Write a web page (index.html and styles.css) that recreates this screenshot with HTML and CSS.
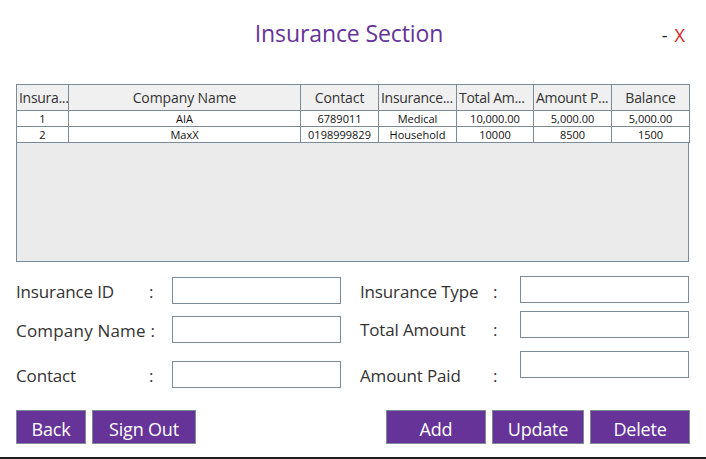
FILE: index.html
```html
<!DOCTYPE html>
<html lang="en">
<head>
<meta charset="utf-8">
<title>Insurance Section</title>
<link rel="stylesheet" href="styles.css">
</head>
<body>
<div class="window">
  <header class="titlebar">
    <div class="spacer"></div>
    <h1 class="title">Insurance Section</h1>
    <div class="controls"><span class="min">-</span><span class="close">X</span></div>
  </header>

  <div class="grid-wrap">
    <table class="grid">
      <colgroup>
        <col class="c-id"><col class="c-name"><col class="c-std"><col class="c-std"><col class="c-std2"><col class="c-std"><col class="c-std">
      </colgroup>
      <thead>
        <tr>
          <th class="left">Insura...</th>
          <th>Company Name</th>
          <th>Contact</th>
          <th class="left">Insurance...</th>
          <th class="left">Total Am...</th>
          <th class="left">Amount P...</th>
          <th>Balance</th>
        </tr>
      </thead>
      <tbody>
        <tr><td>1</td><td>AIA</td><td>6789011</td><td>Medical</td><td>10,000.00</td><td>5,000.00</td><td>5,000.00</td></tr>
        <tr><td>2</td><td>MaxX</td><td>0198999829</td><td>Household</td><td>10000</td><td>8500</td><td>1500</td></tr>
      </tbody>
    </table>
  </div>

  <div class="form">
    <div class="col col-left">
      <div class="field f-l1">
        <span class="label">Insurance ID</span><span class="colon">:</span>
        <input class="box" type="text">
      </div>
      <div class="field f-l2">
        <span class="label wide">Company Name :</span>
        <input class="box" type="text">
      </div>
      <div class="field f-l3">
        <span class="label">Contact</span><span class="colon">:</span>
        <input class="box" type="text">
      </div>
    </div>
    <div class="col col-right">
      <div class="field f-r1">
        <span class="label">Insurance Type</span><span class="colon">:</span>
        <input class="box" type="text">
      </div>
      <div class="field f-r2">
        <span class="label">Total Amount</span><span class="colon">:</span>
        <input class="box" type="text">
      </div>
      <div class="field f-r3">
        <span class="label">Amount Paid</span><span class="colon">:</span>
        <input class="box" type="text">
      </div>
    </div>
  </div>

  <div class="actions">
    <div class="group">
      <button class="btn b-back">Back</button>
      <button class="btn b-sign">Sign Out</button>
    </div>
    <div class="group group-right">
      <button class="btn b-add">Add</button>
      <button class="btn b-update">Update</button>
      <button class="btn b-delete">Delete</button>
    </div>
  </div>
  <div class="bottom-bar"></div>
</div>
</body>
</html>
```

FILE: styles.css
```css
* { box-sizing: border-box; }

html, body {
  margin: 0;
  padding: 0;
  background: #ffffff;
}

body {
  font-family: "Open Sans", "Noto Sans", sans-serif;
  color: #333333;
  width: 706px;
  height: 459px;
  overflow: hidden;
}

.window {
  display: flex;
  flex-direction: column;
  height: 459px;
  padding: 0 16px 0 16px;
}

.titlebar {
  height: 84px;
  flex: none;
  display: grid;
  grid-template-columns: 1fr auto 1fr;
  align-items: start;
}

.title {
  margin: 17px 8px 0 0;
  font-weight: 400;
  font-size: 23px;
  line-height: 32px;
  color: #663399;
  letter-spacing: -0.1px;
}

.controls {
  justify-self: end;
  margin: 22px 5px 0 0;
  font-size: 18px;
  line-height: 26px;
  display: flex;
  gap: 7px;
}

.min { color: #222222; }
.close { color: #e0201c; }

.grid-wrap {
  height: 178px;
  flex: none;
  border: 1px solid #7d8b99;
  background: #ebebeb;
  width: 673px;
}

.grid {
  border-collapse: collapse;
  table-layout: fixed;
  width: 672px;
  margin: -1px 0 0 -1px;
}

.c-id { width: 52px; }
.c-name { width: 232px; }
.c-std { width: 78px; }
.c-std2 { width: 77px; }

.grid th {
  height: 26px;
  background: #f0f0f0;
  border: 1px solid #7d8b99;
  font-weight: 400;
  font-size: 14px;
  color: #333333;
  padding: 0 1px;
  white-space: nowrap;
  overflow: hidden;
  text-align: center;
  letter-spacing: -0.1px;
}

.grid th.left { text-align: left; padding-left: 2px; letter-spacing: -0.3px; }

.grid td {
  height: 16px;
  background: #ffffff;
  border: 1px solid #7d8b99;
  font-size: 11px;
  line-height: 14px;
  padding: 0;
  color: #111111;
  text-align: center;
  white-space: nowrap;
  overflow: hidden;
}

.form {
  height: 148px;
  flex: none;
  width: 673px;
  display: flex;
  justify-content: space-between;
}

.col {
  display: flex;
  flex-direction: column;
}

.col-left { width: 325px; }
.col-right { width: 329px; }

.field {
  display: flex;
  align-items: flex-start;
  height: 27px;
}

.label {
  width: 133px;
  font-size: 17px;
  line-height: 24px;
  color: #333333;
  white-space: nowrap;
  letter-spacing: -0.15px;
}

.label.wide { width: auto; flex: 1; letter-spacing: 0.2px; }

.colon {
  font-size: 17px;
  line-height: 24px;
  color: #333333;
}

.box {
  margin-left: auto;
  width: 169px;
  height: 27px;
  border: 1px solid #7d8b99;
  background: #ffffff;
  padding: 0;
  outline: none;
}

.f-l1 { margin-top: 15px; }
.f-l2 { margin-top: 12px; }
.f-l3 { margin-top: 18px; }

.f-l1 .label, .f-l1 .colon,
.f-l2 .label,
.f-l3 .label, .f-l3 .colon { margin-top: 3px; }

.f-r1 { margin-top: 14px; }
.f-r2 { margin-top: 8px; }
.f-r3 { margin-top: 13px; }

.f-r1 .label, .f-r1 .colon { margin-top: 4px; }
.f-r2 .label, .f-r2 .colon { margin-top: 7px; }
.f-r3 .label, .f-r3 .colon { margin-top: 13px; }

.actions {
  display: flex;
  flex: none;
  justify-content: space-between;
  height: 34px;
  width: 674px;
}

.group {
  display: flex;
  gap: 6px;
}

.btn {
  height: 34px;
  background: #663399;
  border: 1px solid #7d8b99;
  color: #ffffff;
  font-family: "Open Sans", "Noto Sans", sans-serif;
  font-size: 18px;
  line-height: 20px;
  padding: 3px 0 0 0;
  letter-spacing: -0.2px;
}

.b-back { width: 70px; }
.b-sign { width: 104px; }
.b-add { width: 100px; }
.b-update { width: 92px; }
.b-delete { width: 100px; }

.bottom-bar {
  flex: none;
  margin: 13px -16px 0 -16px;
  height: 3px;
  background: #1e1e1e;
}
```
